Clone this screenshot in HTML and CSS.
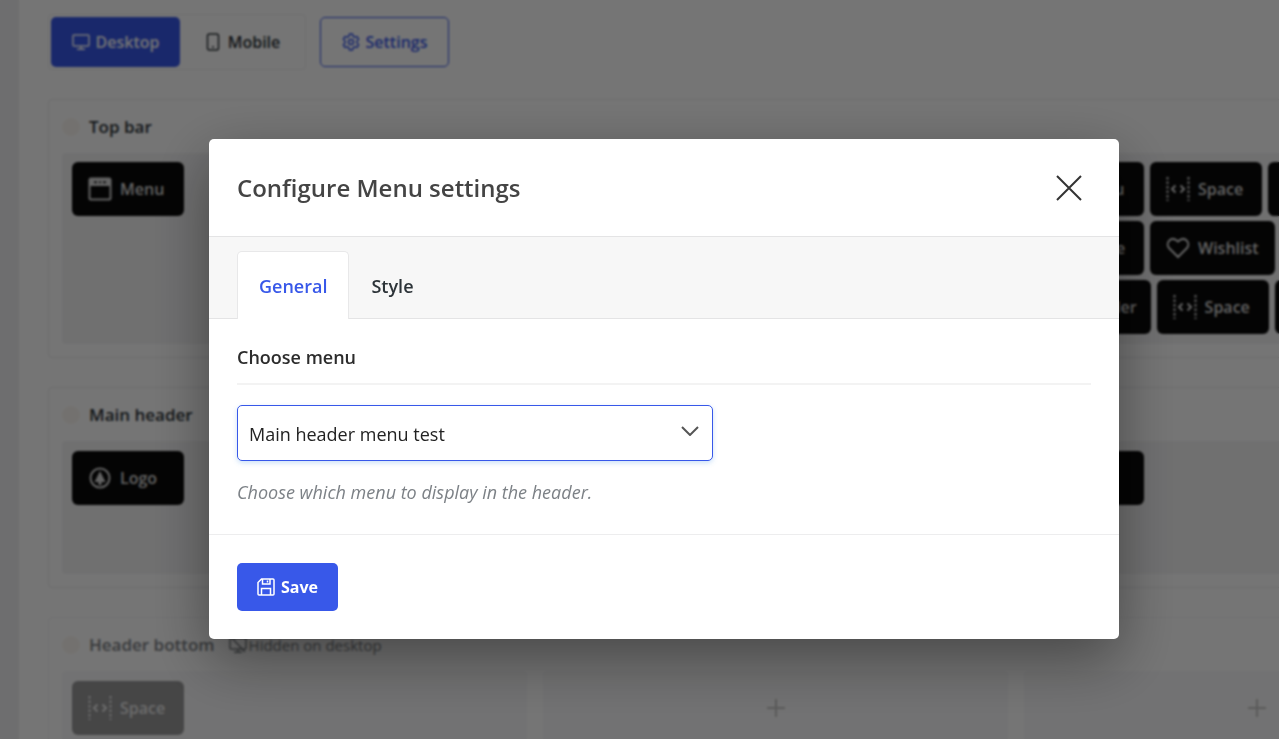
FILE: index.html
```html
<!DOCTYPE html>
<html lang="en">
<head>
<meta charset="utf-8">
<meta name="viewport" content="width=device-width, initial-scale=1">
<title>Configure Menu settings</title>
<link rel="stylesheet" href="styles.css">
</head>
<body>
<svg class="sprite" aria-hidden="true">
  <symbol id="i-space" viewBox="0 0 24 24"><path d="M1.500 0v24M22.500 0v24" stroke-dasharray="2.500 2"/><path d="M9.500 8.500 6 12l3.500 3.500M14.500 8.500 18 12l-3.500 3.500" stroke-width="2"/></symbol>
  <symbol id="i-menu" viewBox="0 0 24 24"><rect x="1.500" y="1.500" width="21" height="21" rx="1.500"/><path d="M2 2h20v7H2z" fill="currentColor" stroke="none"/><path d="M6 5.200h3M11 5.200h2M15 5.200h3" stroke="#333" stroke-width="2"/></symbol>
  <symbol id="i-logo" viewBox="0 0 24 24"><circle cx="12" cy="12" r="9.500"/><path d="m12 5 5.500 11h-4v3h-3v-3h-4z" fill="currentColor" stroke="none"/></symbol>
  <symbol id="i-heart" viewBox="0 0 24 24"><path d="M12 21 3 12C-1 7 5-1 12 5.500 19-1 25 7 21 12z"/></symbol>
  <symbol id="i-plus" viewBox="0 0 20 20"><path d="M10 1v18M1 10h18"/></symbol>
</svg>

<div class="page">
  <div class="rail"></div>
  <main class="builder">
    <div class="toolbar">
      <div class="devices">
        <button class="btn btn-primary" type="button"><svg class="ico" viewBox="0 0 18 18"><rect x="1" y="2" width="16" height="11" rx="1"/><path d="M9 13v3M5 16.200h8"/></svg>Desktop</button>
        <button class="btn btn-plain" type="button"><svg class="ico" viewBox="0 0 18 18"><rect x="3.500" y="1" width="11" height="16" rx="2"/><path d="M8 14h2"/></svg>Mobile</button>
      </div>
      <button class="btn btn-outline" type="button"><svg class="ico" viewBox="0 0 18 18"><path d="M7.500 1h3l.6 2.200 1.700 1 2.300-.6 1.500 2.600L15 8v2l1.600 1.800-1.500 2.600-2.300-.6-1.700 1-.6 2.200h-3l-.6-2.200-1.700-1-2.300.6-1.500-2.600L3 10V8L1.400 6.200l1.500-2.600 2.300.6 1.700-1z"/><circle cx="9" cy="9" r="2.500"/></svg>Settings</button>
    </div>

    <section class="panel">
      <h2 class="panel-title"><span class="dot"></span>Top bar</h2>
      <div class="zones">
        <div class="zone zone-tall"><button class="item" type="button"><svg><use href="#i-menu"/></svg>Menu</button></div>
        <div class="zone"></div>
        <div class="zone zone-stack">
          <div class="row">
            <button class="item" type="button"><svg><use href="#i-menu"/></svg>Menu</button>
            <button class="item" type="button"><svg><use href="#i-space"/></svg>Space</button>
            <button class="item" type="button" aria-label="Menu"><svg><use href="#i-menu"/></svg></button>
          </div>
          <div class="row">
            <button class="item" type="button"><svg><use href="#i-space"/></svg>Space</button>
            <button class="item item-mid" type="button"><svg><use href="#i-heart"/></svg>Wishlist</button>
            <button class="item" type="button" aria-label="Space"><svg><use href="#i-space"/></svg></button>
          </div>
          <div class="row">
            <button class="item item-wide" type="button"><svg><use href="#i-menu"/></svg>Header</button>
            <button class="item" type="button"><svg><use href="#i-space"/></svg>Space</button>
            <button class="item" type="button" aria-label="Menu"><svg><use href="#i-menu"/></svg></button>
          </div>
        </div>
      </div>
    </section>

    <section class="panel">
      <h2 class="panel-title"><span class="dot"></span>Main header</h2>
      <div class="zones">
        <div class="zone zone-short"><button class="item" type="button"><svg><use href="#i-logo"/></svg>Logo</button></div>
        <div class="zone"></div>
        <div class="zone"><button class="item" type="button" aria-label="Wishlist"><svg><use href="#i-heart"/></svg></button></div>
      </div>
    </section>

    <section class="panel panel-off">
      <h2 class="panel-title"><span class="dot"></span>Header bottom <span class="note"><svg class="ico" viewBox="0 0 18 18"><rect x="1" y="2" width="16" height="11" rx="1"/><path d="M9 13v3M5 16.200h8M2 1l14 15"/></svg>Hidden on desktop</span></h2>
      <div class="zones">
        <div class="zone zone-short"><button class="item" type="button"><svg><use href="#i-space"/></svg>Space</button></div>
        <div class="zone zone-add"><svg class="plus"><use href="#i-plus"/></svg></div>
        <div class="zone zone-add"><svg class="plus"><use href="#i-plus"/></svg></div>
      </div>
    </section>
  </main>
</div>

<div class="backdrop">
  <div class="dialog" role="dialog" aria-modal="true" aria-labelledby="dialog-title">
    <header class="dialog-head">
      <h1 id="dialog-title">Configure Menu settings</h1>
      <button class="close" type="button" aria-label="Close"><svg viewBox="0 0 26 26"><path d="m1 1 24 24M25 1 1 25"/></svg></button>
    </header>
    <div class="tabs" role="tablist">
      <button class="tab tab-on" type="button" role="tab" aria-selected="true">General</button>
      <button class="tab" type="button" role="tab" aria-selected="false">Style</button>
    </div>
    <div class="dialog-body">
      <label class="field-label" for="menu">Choose menu</label>
      <div class="select">
        <select id="menu"><option>Main header menu test</option></select>
        <svg class="chevron" viewBox="0 0 18 10"><path d="m1 1 8 8 8-8"/></svg>
      </div>
      <p class="hint">Choose which menu to display in the header.</p>
    </div>
    <footer class="dialog-foot">
      <button class="btn btn-save" type="button"><svg class="ico" viewBox="0 0 18 18"><path d="M4.500 1H16a1 1 0 0 1 1 1v14a1 1 0 0 1-1 1H2a1 1 0 0 1-1-1V4.500zM5.500 1v5h7.500V1M4.500 17v-6.500h9V17M10.500 2.500v2"/></svg>Save</button>
    </footer>
  </div>
</div>
</body>
</html>
```

FILE: styles.css
```css
* { box-sizing: border-box; }

body {
  margin: 0;
  height: 100vh;
  overflow: hidden;
  font-family: "Open Sans", "Noto Sans", sans-serif;
  color: #2c3338;
  background: #fff;
}

h1, h2, p { margin: 0; }

button, select { font: inherit; color: inherit; cursor: pointer; }

svg { fill: none; stroke: currentColor; stroke-width: 2; }

.sprite { display: none; }

.page { display: flex; height: 100vh; overflow: hidden; }

.rail { flex: 0 0 19px; background: #f0f0f1; }

.builder { flex: 1 0 auto; min-width: 1484px; padding: 14px 0 0 29px; }

.toolbar { display: flex; align-items: center; gap: 14px; margin-bottom: 29px; }

.devices {
  display: flex;
  width: 258px;
  padding: 2px;
  border: 1px solid #f0f0f1;
  border-radius: 4px;
}

.btn {
  display: flex;
  align-items: center;
  justify-content: center;
  gap: 6px;
  height: 50px;
  padding: 0 20px;
  border: 0;
  border-radius: 5px;
  background: none;
  font-size: 16px;
  font-weight: 600;
}

.ico { width: 18px; height: 18px; flex: none; stroke-width: 1.5; }

.btn-primary { background: #3858e9; color: #fff; min-width: 129px; }
.btn-plain { min-width: 124px; }
.btn-outline { padding: 0 18px; border: 1px solid #3858e9; color: #3858e9; min-width: 129px; }

.panel {
  margin-bottom: 29px;
  padding: 13px;
  border: 1px solid #ebebec;
  border-radius: 4px;
}

.panel-title {
  display: flex;
  align-items: center;
  margin-bottom: 12px;
  font-size: 17px;
  line-height: 28px;
  font-weight: 600;
}

.dot { width: 18px; height: 18px; margin-right: 9px; border-radius: 50%; background: #fbf7f2; }

.note {
  display: flex;
  align-items: center;
  gap: 2px;
  margin-left: 14px;
  font-size: 15px;
  font-weight: 400;
}

.zones { display: grid; grid-template-columns: 1fr 1fr 467px; gap: 16px; }

.zone { padding: 10px; border-radius: 4px; background: #f4f4f5; }
.zone-tall { min-height: 191px; padding-top: 9px; }
.zone-short { min-height: 133px; }
.zone-stack { display: flex; flex-direction: column; gap: 5px; padding-top: 9px; }
.zone-add { display: flex; justify-content: center; padding-top: 27px; }

.row { display: flex; gap: 6px; }

.item {
  display: flex;
  align-items: center;
  gap: 8px;
  flex: none;
  min-width: 112px;
  height: 54px;
  padding: 0 16px;
  border: 0;
  border-radius: 6px;
  background: #0a0a0a;
  color: #d8d8d8;
  font-size: 16px;
  font-weight: 600;
}
.item svg { width: 24px; height: 24px; flex: none; }
.item-mid { min-width: 124px; }
.item-wide { padding-right: 14px; }

.panel-off { border-color: #f4f4f5; }
.panel-off .panel-title { color: #7d8185; }
.panel-off .zones { grid-template-columns: 1fr 1fr 1fr; }
.panel-off .zone { background: #f9f9fa; }
.panel-off .item { opacity: 0.4; }
.plus { width: 20px; height: 20px; color: #c4c4c4; }

.backdrop {
  position: fixed;
  inset: 0;
  display: flex;
  align-items: flex-start;
  padding: 139px 160px 100px 209px;
  background: rgba(0, 0, 0, 0.54);
  backdrop-filter: blur(1px);
}

.dialog {
  flex: 1;
  border-radius: 5px;
  overflow: hidden;
  background: #fff;
  box-shadow: 0 20px 60px rgba(0, 0, 0, 0.4);
}

.dialog-head {
  display: flex;
  align-items: center;
  justify-content: space-between;
  height: 98px;
  padding: 0 37px 0 28px;
  border-bottom: 1px solid #e4e4e5;
}

.dialog-head h1 { font-size: 24px; line-height: 32px; font-weight: 600; color: #444; }

.close { display: flex; padding: 0; border: 0; background: none; color: #333; }
.close svg { width: 26px; height: 26px; }

.tabs {
  display: flex;
  height: 82px;
  padding: 14px 28px 0;
  background: #f7f7f7;
  box-shadow: inset 0 -1px #e4e4e5;
}

.tab {
  padding: 0 21px;
  border: 1px solid transparent;
  border-bottom: 0;
  background: none;
  font-size: 18px;
  font-weight: 600;
}
.tab-on { border-color: #e8e8e9; border-radius: 5px 5px 0 0; background: #fff; color: #3858e9; }

.dialog-body { padding: 24px 28px 29px; }

.field-label {
  display: block;
  margin-bottom: 20px;
  padding-bottom: 12px;
  border-bottom: 2px solid #f3f3f3;
  font-size: 18px;
  line-height: 28px;
  font-weight: 600;
  color: #2c2c2c;
}

.select { position: relative; width: 476px; max-width: 100%; }

.select select {
  appearance: none;
  display: block;
  width: 100%;
  height: 56px;
  padding: 2px 44px 0 11px;
  border: 1px solid #3858e9;
  border-radius: 5px;
  background: #fff;
  color: #222;
  font-size: 18px;
  box-shadow: 0 2px 5px rgba(56, 140, 233, 0.25);
}

.chevron {
  position: absolute;
  top: 21px;
  right: 14px;
  width: 18px;
  height: 10px;
  color: #555;
  pointer-events: none;
}

.hint { margin-top: 18px; font-size: 18px; line-height: 26px; font-style: italic; color: #7c8186; }

.dialog-foot { padding: 28px; border-top: 1px solid #ededee; }

.btn-save { height: 48px; background: #3858e9; color: #fff; font-weight: 700; }
```
